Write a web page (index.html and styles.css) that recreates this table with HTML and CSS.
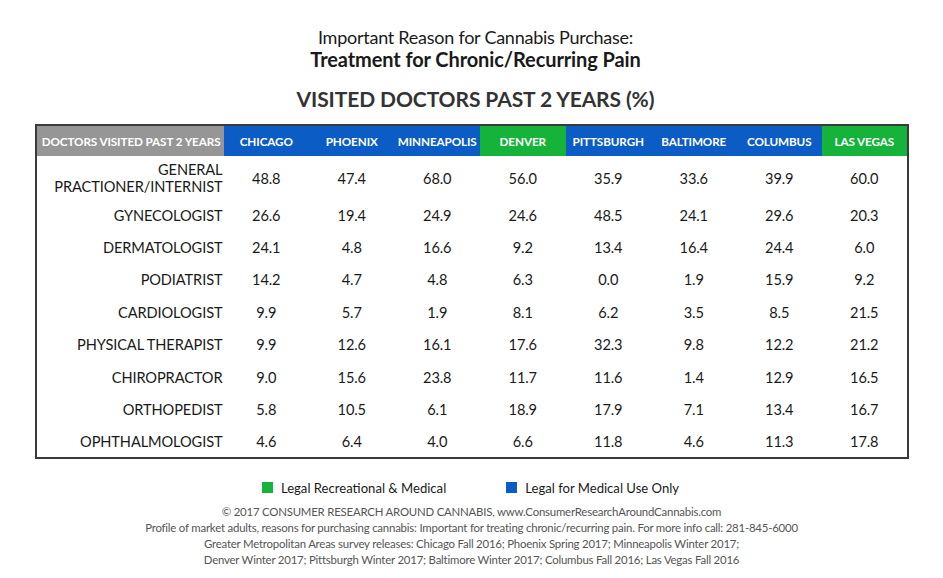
FILE: index.html
```html
<!DOCTYPE html>
<html>
<head>
<meta charset="utf-8">
<link rel="stylesheet" href="styles.css">
</head>
<body>
<div class="page">
  <div class="titles">
    <div class="t1">Important Reason for Cannabis Purchase:</div>
    <div class="t2">Treatment for Chronic/Recurring Pain</div>
    <div class="t3">VISITED DOCTORS PAST 2 YEARS (%)</div>
  </div>
  <table class="data">
    <colgroup>
      <col class="c-label"><col class="c-city"><col class="c-city"><col class="c-city"><col class="c-city"><col class="c-city"><col class="c-city"><col class="c-city"><col class="c-city">
    </colgroup>
    <thead>
      <tr>
        <th class="h-gray">DOCTORS VISITED PAST 2 YEARS</th>
        <th class="h-blue">CHICAGO</th>
        <th class="h-blue">PHOENIX</th>
        <th class="h-blue">MINNEAPOLIS</th>
        <th class="h-green">DENVER</th>
        <th class="h-blue">PITTSBURGH</th>
        <th class="h-blue">BALTIMORE</th>
        <th class="h-blue">COLUMBUS</th>
        <th class="h-green">LAS VEGAS</th>
      </tr>
    </thead>
    <tbody>
      <tr class="first"><td class="lbl">GENERAL<br>PRACTIONER/INTERNIST</td><td>48.8</td><td>47.4</td><td>68.0</td><td>56.0</td><td>35.9</td><td>33.6</td><td>39.9</td><td>60.0</td></tr>
      <tr><td class="lbl">GYNECOLOGIST</td><td>26.6</td><td>19.4</td><td>24.9</td><td>24.6</td><td>48.5</td><td>24.1</td><td>29.6</td><td>20.3</td></tr>
      <tr><td class="lbl">DERMATOLOGIST</td><td>24.1</td><td>4.8</td><td>16.6</td><td>9.2</td><td>13.4</td><td>16.4</td><td>24.4</td><td>6.0</td></tr>
      <tr><td class="lbl">PODIATRIST</td><td>14.2</td><td>4.7</td><td>4.8</td><td>6.3</td><td>0.0</td><td>1.9</td><td>15.9</td><td>9.2</td></tr>
      <tr><td class="lbl">CARDIOLOGIST</td><td>9.9</td><td>5.7</td><td>1.9</td><td>8.1</td><td>6.2</td><td>3.5</td><td>8.5</td><td>21.5</td></tr>
      <tr><td class="lbl">PHYSICAL THERAPIST</td><td>9.9</td><td>12.6</td><td>16.1</td><td>17.6</td><td>32.3</td><td>9.8</td><td>12.2</td><td>21.2</td></tr>
      <tr><td class="lbl">CHIROPRACTOR</td><td>9.0</td><td>15.6</td><td>23.8</td><td>11.7</td><td>11.6</td><td>1.4</td><td>12.9</td><td>16.5</td></tr>
      <tr><td class="lbl">ORTHOPEDIST</td><td>5.8</td><td>10.5</td><td>6.1</td><td>18.9</td><td>17.9</td><td>7.1</td><td>13.4</td><td>16.7</td></tr>
      <tr class="last"><td class="lbl">OPHTHALMOLOGIST</td><td>4.6</td><td>6.4</td><td>4.0</td><td>6.6</td><td>11.8</td><td>4.6</td><td>11.3</td><td>17.8</td></tr>
    </tbody>
  </table>
  <div class="legend">
    <div class="leg-item"><span class="sw sw-green"></span>Legal Recreational &amp; Medical</div>
    <div class="leg-item"><span class="sw sw-blue"></span>Legal for Medical Use Only</div>
  </div>
  <div class="footer">
    <div>© 2017 CONSUMER RESEARCH AROUND CANNABIS, www.ConsumerResearchAroundCannabis.com</div>
    <div>Profile of market adults, reasons for purchasing cannabis: Important for treating chronic/recurring pain. For more info call: 281-845-6000</div>
    <div>Greater Metropolitan Areas survey releases: Chicago Fall 2016; Phoenix Spring 2017; Minneapolis Winter 2017;</div>
    <div>Denver Winter 2017; Pittsburgh Winter 2017; Baltimore Winter 2017; Columbus Fall 2016; Las Vegas Fall 2016</div>
  </div>
</div>
</body>
</html>
```
FILE: styles.css
```css
html, body {
  margin: 0;
  padding: 0;
  background: #ffffff;
}
.page {
  width: 943px;
  height: 578px;
  font-family: "Lato", "Open Sans", sans-serif;
  color: #1a1a1a;
  display: flex;
  flex-direction: column;
  align-items: center;
  overflow: hidden;
}
.titles {
  text-align: center;
  padding-top: 26px;
  padding-left: 8px;
}
.t1 {
  font-size: 18px;
  line-height: 22px;
  letter-spacing: -0.25px;
}
.t2 {
  font-size: 20px;
  line-height: 22px;
  font-weight: 700;
  letter-spacing: -0.1px;
}
.t3 {
  margin-top: 17px;
  font-size: 21px;
  line-height: 24px;
  font-weight: 700;
  color: #333333;
  letter-spacing: -0.1px;
}
.data {
  margin-top: 13px;
  border-collapse: collapse;
  border: 2px solid #3a3a3a;
  width: 874px;
  table-layout: fixed;
}
.c-label { width: 188px; }
.c-city { width: 85.5px; }
.data th {
  height: 30px;
  padding: 0;
  font-size: 11.7px;
  font-weight: 700;
  color: #ffffff;
  text-align: center;
  white-space: nowrap;
  letter-spacing: -0.1px;
  border-bottom: 1px solid #ffffff;
}
.data th.h-gray { background: #969696; text-align: right; padding-right: 3px; }
.data th.h-blue { background: #0b5cc4; }
.data th.h-green { background: #15b33a; }
.data td {
  height: 32.4px;
  padding: 0;
  font-size: 14.6px;
  color: #1a1a1a;
  text-align: center;
  letter-spacing: -0.1px;
}
.data td.lbl {
  text-align: right;
  padding-right: 1px;
  white-space: nowrap;
}
.data tr.first td {
  height: 42px;
  line-height: 17px;
}
.data tr.last td {
  height: 31px;
}
.legend {
  margin-top: 21px;
  display: flex;
  gap: 60px;
  font-size: 13.1px;
  line-height: 16px;
  color: #1a1a1a;
  padding-right: 2px;
}
.leg-item {
  display: flex;
  align-items: center;
}
.sw {
  display: inline-block;
  width: 11px;
  height: 11px;
  margin-right: 8px;
}
.sw-green { background: #15b33a; }
.sw-blue { background: #0b5cc4; }
.footer {
  margin-top: 8px;
  text-align: center;
  font-size: 11.4px;
  line-height: 16px;
  color: #555555;
  letter-spacing: -0.2px;
}
```
